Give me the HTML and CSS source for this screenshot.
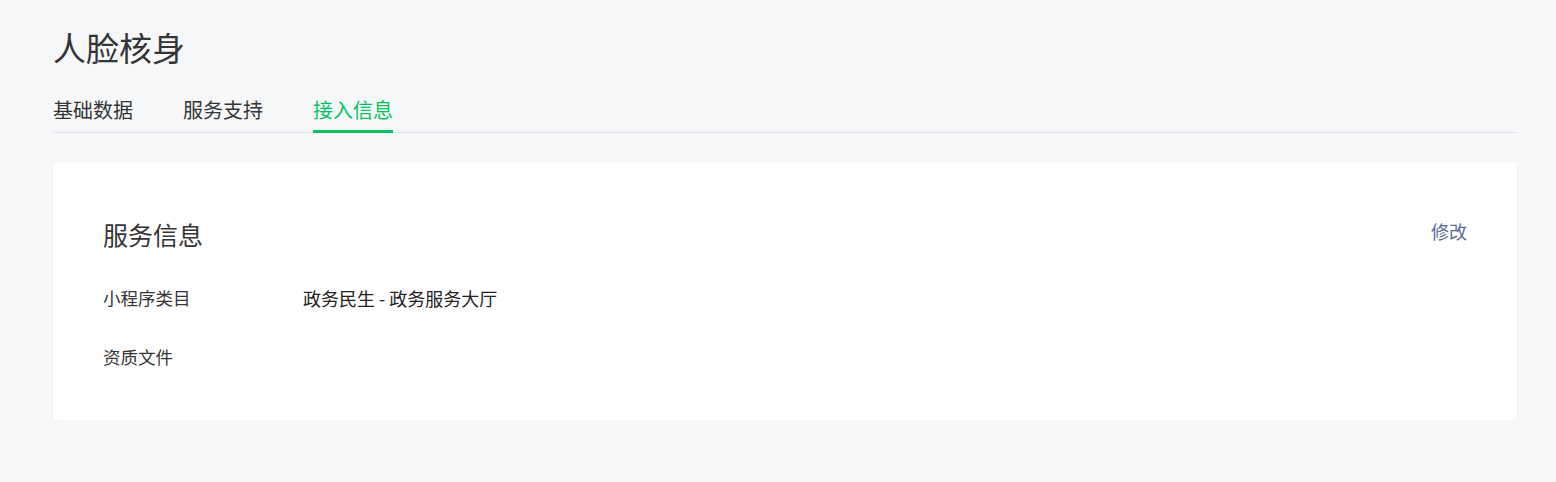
FILE: index.html
```html
<!DOCTYPE html>
<html lang="zh-CN">
<head>
    <meta charset="UTF-8">
    <meta name="viewport" content="width=device-width, initial-scale=1.0">
    <title>人脸核身</title>
    <link rel="stylesheet" href="styles.css">
</head>
<body>
    <main class="page">
        <h1 class="page-title">人脸核身</h1>

        <nav class="tabs">
            <a class="tab" href="#">基础数据</a>
            <a class="tab" href="#">服务支持</a>
            <a class="tab tab-active" href="#">接入信息</a>
        </nav>

        <section class="card">
            <div class="card-head">
                <h2 class="card-title">服务信息</h2>
                <a class="card-action" href="#">修改</a>
            </div>

            <div class="info-row">
                <span class="info-label">小程序类目</span>
                <span class="info-value">政务民生 - 政务服务大厅</span>
            </div>
            <div class="info-row">
                <span class="info-label">资质文件</span>
                <span class="info-value"></span>
            </div>
        </section>
    </main>
</body>
</html>
```

FILE: styles.css
```css
body {
    margin: 0;
    padding: 0;
    background-color: #f6f7f9;
    color: #353535;
    font-family: "Noto Sans CJK SC", "Noto Sans", sans-serif;
}

a {
    text-decoration: none;
}

.page {
    padding: 25px 39px 0 53px;
}

.page-title {
    margin: 0;
    font-size: 33px;
    font-weight: normal;
    line-height: 44px;
}

.tabs {
    display: flex;
    gap: 50px;
    margin-top: 27px;
    border-bottom: 1px solid #e4e5e9;
}

.tab {
    color: #353535;
    font-size: 20px;
    line-height: 28px;
    padding-bottom: 6px;
    border-bottom: 3px solid transparent;
    margin-bottom: -1px;
}

.tab-active {
    color: #07c160;
    border-bottom-color: #07c160;
}

.card {
    margin-top: 29px;
    background: #fff;
    border-radius: 4px;
    box-shadow: 0 1px 3px rgba(0, 0, 0, 0.05);
    padding: 55px 50px 51px;
}

.card-head {
    display: flex;
    align-items: center;
    justify-content: space-between;
}

.card-title {
    margin: 0;
    font-size: 25px;
    font-weight: normal;
    line-height: 34px;
}

.card-action {
    color: #576b95;
    font-size: 18px;
    line-height: 26px;
    margin-bottom: 6px;
}

.info-row {
    display: flex;
    margin-top: 35px;
    font-size: 17.5px;
    line-height: 24px;
}

.info-label {
    width: 200px;
    flex-shrink: 0;
}

.info-value {
    color: #222;
    font-size: 18px;
}
```
